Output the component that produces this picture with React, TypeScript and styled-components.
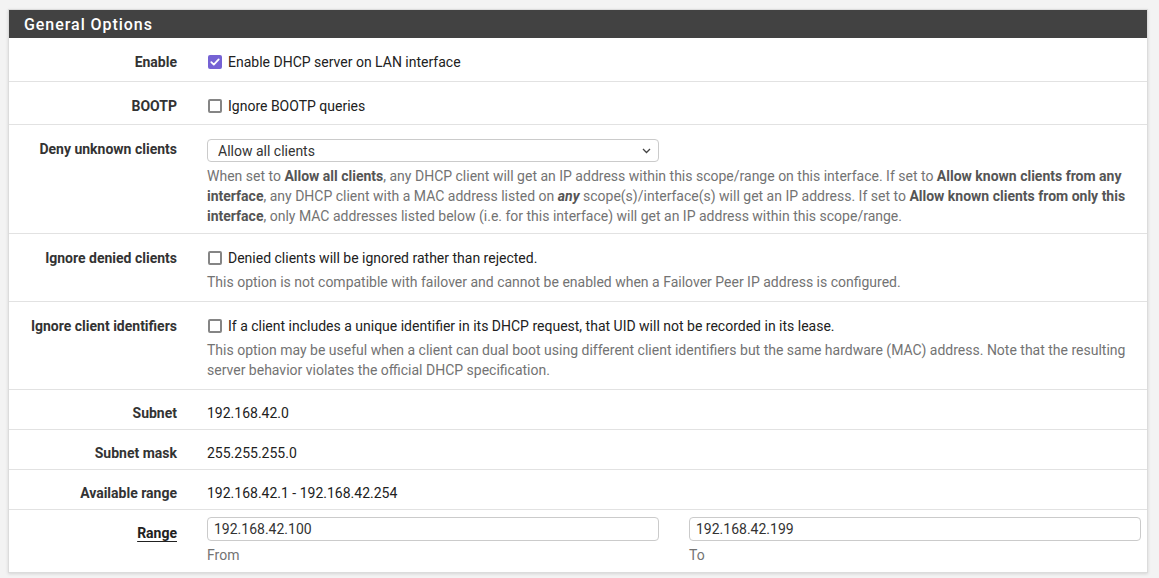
import React from "react";
import styled, { createGlobalStyle } from "styled-components";

const GlobalStyle = createGlobalStyle`
  html, body { margin: 0; padding: 0; background: #f3f3f3; }
  body { font-family: Roboto, "Liberation Sans", Arial, sans-serif; font-size: 14px; color: #212121; }
  * { box-sizing: border-box; }
`;

const Page = styled.div`
  padding: 9px 11px 0 8px;
  min-height: 578px;
`;

const Panel = styled.section`
  background: #fff;
  border: 1px solid #dcdcdc;
  box-shadow: 0 1px 3px rgba(0, 0, 0, 0.12);
`;

const Header = styled.h2`
  margin: 0;
  height: 28px;
  display: flex;
  align-items: center;
  padding: 0 15px;
  background: #424242;
  color: #fff;
  font-size: 16px;
  font-weight: 500;
  letter-spacing: 0.95px;
`;

const Row = styled.div<{ $pt: number; $pb: number }>`
  display: grid;
  grid-template-columns: 168px 1fr;
  column-gap: 30px;
  padding: ${(p) => p.$pt}px 6px ${(p) => p.$pb}px 0;
  & + & { border-top: 1px solid #e2e2e2; }
`;

const Label = styled.div<{ $mt?: number }>`
  text-align: right;
  font-weight: 700;
  color: #333;
  line-height: 20px;
  margin-top: ${(p) => p.$mt ?? 0}px;
`;

const Underlined = styled.span`
  text-decoration: underline;
  text-underline-offset: 3px;
  text-decoration-thickness: 1px;
  color: #212121;
`;

const Content = styled.div`
  min-width: 0;
`;

const CheckLine = styled.label`
  display: flex;
  align-items: center;
  line-height: 20px;
  color: #212121;
`;

const Box = styled.span<{ $checked?: boolean }>`
  width: 14px;
  height: 14px;
  margin: 0 6px 0 1px;
  flex: none;
  border-radius: 2px;
  border: ${(p) => (p.$checked ? "none" : "2px solid #858585")};
  background: ${(p) => (p.$checked ? "#7562d4" : "#fff")};
  display: flex;
  align-items: center;
  justify-content: center;
`;

const Help = styled.div<{ $mt?: number }>`
  margin-top: ${(p) => p.$mt ?? 4}px;
  color: #737373;
  line-height: 20px;
  b { color: #555; font-weight: 700; }
`;

const Value = styled.div`
  line-height: 20px;
  color: #212121;
`;

const SelectWrap = styled.div`
  position: relative;
  width: calc(50% - 15px);
`;

const Select = styled.select`
  appearance: none;
  width: 100%;
  height: 23px;
  border: 1px solid #cbcbcb;
  border-radius: 4px;
  background: #fff;
  padding: 0 10px;
  font-family: inherit;
  font-size: 14px;
  color: #333;
  outline: none;
`;

const Chevron = styled.svg`
  position: absolute;
  right: 8px;
  top: 9px;
  pointer-events: none;
`;

const Pair = styled.div`
  display: grid;
  grid-template-columns: 1fr 1fr;
  column-gap: 30px;
`;

const Input = styled.input`
  width: 100%;
  height: 24px;
  border: 1px solid #cbcbcb;
  border-radius: 4px;
  padding: 0 6px;
  font-family: inherit;
  font-size: 14px;
  color: #333;
  outline: none;
  display: block;
`;

const Check = ({ checked, children }: { checked?: boolean; children: React.ReactNode }) => (
  <CheckLine>
    <Box $checked={checked}>
      {checked && (
        <svg width="10" height="8" viewBox="0 0 10 8">
          <path d="M1.3 4.2 L3.8 6.6 L8.7 1.4" fill="none" stroke="#fff" strokeWidth="1.8" strokeLinecap="round" strokeLinejoin="round" />
        </svg>
      )}
    </Box>
    {children}
  </CheckLine>
);

export default function App() {
  return (
    <>
      <GlobalStyle />
      <Page>
        <Panel>
          <Header>General Options</Header>
          <Row $pt={14} $pb={9}>
            <Label>Enable</Label>
            <Content>
              <Check checked>Enable DHCP server on LAN interface</Check>
            </Content>
          </Row>
          <Row $pt={14} $pb={8}>
            <Label>BOOTP</Label>
            <Content>
              <Check>Ignore BOOTP queries</Check>
            </Content>
          </Row>
          <Row $pt={14} $pb={7}>
            <Label>Deny unknown clients</Label>
            <Content>
              <SelectWrap>
                <Select defaultValue="allow">
                  <option value="allow">Allow all clients</option>
                  <option value="any">Allow known clients from any interface</option>
                  <option value="this">Allow known clients from only this interface</option>
                </Select>
                <Chevron width="9" height="6" viewBox="0 0 9 6">
                  <path d="M1 1 L4.5 4.5 L8 1" fill="none" stroke="#444" strokeWidth="1.3" />
                </Chevron>
              </SelectWrap>
              <Help>
                When set to <b>Allow all clients</b>, any DHCP client will get an IP address within this scope/range on this interface. If set to <b>Allow known clients from any interface</b>, any DHCP client with a MAC address listed on <b><i>any</i></b> scope(s)/interface(s) will get an IP address. If set to <b>Allow known clients from only this interface</b>, only MAC addresses listed below (i.e. for this interface) will get an IP address within this scope/range.
              </Help>
            </Content>
          </Row>
          <Row $pt={14} $pb={9}>
            <Label>Ignore denied clients</Label>
            <Content>
              <Check>Denied clients will be ignored rather than rejected.</Check>
              <Help>This option is not compatible with failover and cannot be enabled when a Failover Peer IP address is configured.</Help>
            </Content>
          </Row>
          <Row $pt={14} $pb={9}>
            <Label>Ignore client identifiers</Label>
            <Content>
              <Check>If a client includes a unique identifier in its DHCP request, that UID will not be recorded in its lease.</Check>
              <Help>This option may be useful when a client can dual boot using different client identifiers but the same hardware (MAC) address. Note that the resulting server behavior violates the official DHCP specification.</Help>
            </Content>
          </Row>
          <Row $pt={13} $pb={6}>
            <Label>Subnet</Label>
            <Value>192.168.42.0</Value>
          </Row>
          <Row $pt={13} $pb={6}>
            <Label>Subnet mask</Label>
            <Value>255.255.255.0</Value>
          </Row>
          <Row $pt={13} $pb={6}>
            <Label>Available range</Label>
            <Value>192.168.42.1 - 192.168.42.254</Value>
          </Row>
          <Row $pt={7} $pb={7}>
            <Label $mt={6}>
              <Underlined>Range</Underlined>
            </Label>
            <Pair>
              <div>
                <Input defaultValue="192.168.42.100" />
                <Help $mt={4}>From</Help>
              </div>
              <div>
                <Input defaultValue="192.168.42.199" />
                <Help $mt={4}>To</Help>
              </div>
            </Pair>
          </Row>
        </Panel>
      </Page>
    </>
  );
}
